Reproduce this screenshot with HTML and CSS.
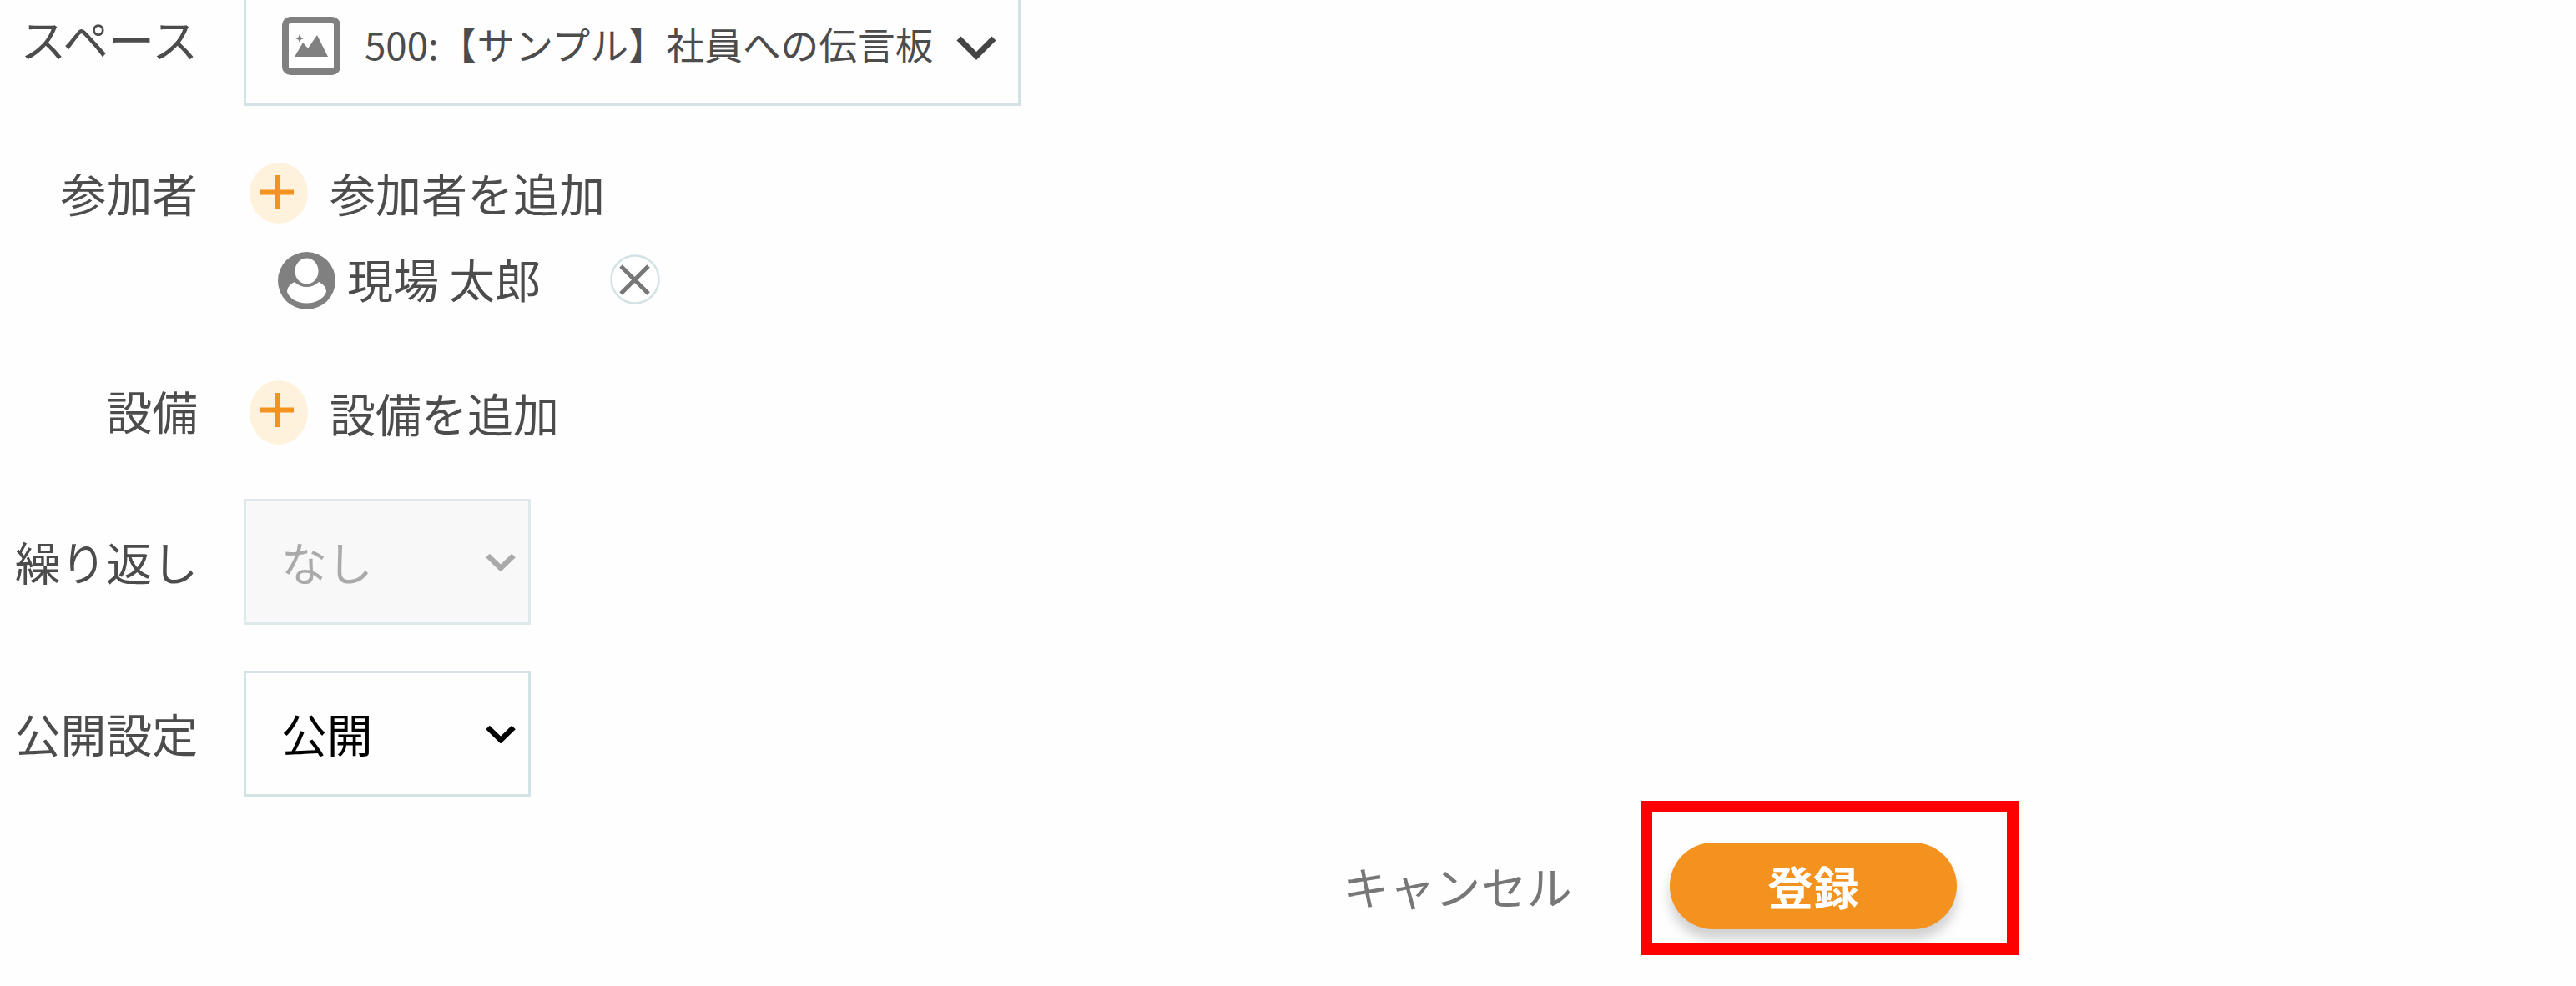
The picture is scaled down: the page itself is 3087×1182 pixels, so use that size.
FILE: index.html
```
<!DOCTYPE html>
<html lang="ja">
	<head>
		<meta charset="utf-8">
		<title>スケジュール登録</title>
		<link rel="stylesheet" href="styles.css">
	</head>
	<body>
		<div class="form">
			<div class="row row-space">
				<div class="label">スペース</div>
				<div class="space-box">
					<svg class="icon-image" viewBox="0 0 70 70">
						<rect x="4" y="4" width="62" height="62" rx="6" fill="none" stroke="#808080" stroke-width="8"/>
						<path d="M15 48L25 31L31 38L42 22L55 48Z" fill="#808080"/>
						<path d="M21 21L22.5 24.5L26 26L22.5 27.5L21 31L19.500 27.500L16 26L19.500 24.500Z" fill="#808080"/>
					</svg>
					<span class="space-name">500:【サンプル】社員への伝言板</span>
					<svg class="icon-arrow" viewBox="0 0 48 30">
						<path d="M3 4L24 25L45 4" fill="none" stroke="#444" stroke-width="7"/>
					</svg>
				</div>
			</div>
			<div class="row row-member">
				<div class="label">参加者</div>
				<div class="add">
					<svg class="icon-plus" viewBox="0 0 70 73">
						<ellipse cx="35" cy="36.5" rx="35" ry="36.5" fill="#fff2dd"/>
						<path d="M13 35.500H53M33.500 15V56" stroke="#f3921e" stroke-width="6"/>
					</svg>
					<span>参加者を追加</span>
				</div>
			</div>
			<div class="member">
				<svg class="icon-user" viewBox="0 0 69 69">
					<circle cx="34.500" cy="34.500" r="34.500" fill="#808080"/>
					<path d="M20 36C14 39 11 43 11 48C14 56 23 61.500 34.500 61.500C46 61.500 55 56 58 48C58 43 55 39 49 36C45 40 40 42 34.500 42C29 42 24 40 20 36Z" fill="#fff"/>
					<ellipse cx="34.500" cy="23" rx="15.500" ry="17" fill="#fff" stroke="#808080" stroke-width="3"/>
				</svg>
				<span class="member-name">現場 太郎</span>
				<svg class="icon-delete" viewBox="0 0 60 60">
					<circle cx="30" cy="30" r="28.500" fill="#fff" stroke="#d3e2e4" stroke-width="2.500"/>
					<path d="M13 14L46 47M46 14L13 47" stroke="#777" stroke-width="5"/>
				</svg>
			</div>
			<div class="row row-facility">
				<div class="label">設備</div>
				<div class="add">
					<svg class="icon-plus" viewBox="0 0 70 77" preserveAspectRatio="none">
						<ellipse cx="35" cy="38.500" rx="35" ry="38.500" fill="#fff2dd"/>
						<path d="M13 35.500H53M33.500 15V56" stroke="#f3921e" stroke-width="6"/>
					</svg>
					<span>設備を追加</span>
				</div>
			</div>
			<div class="row row-repeat">
				<div class="label">繰り返し</div>
				<div class="select disabled">
					<span>なし</span>
					<svg class="icon-select" viewBox="0 0 36 22">
						<path d="M2.500 3L18 18L33.500 3" fill="none" stroke="#aaa" stroke-width="6.500"/>
					</svg>
				</div>
			</div>
			<div class="row row-public">
				<div class="label">公開設定</div>
				<div class="select">
					<span>公開</span>
					<svg class="icon-select" viewBox="0 0 36 22">
						<path d="M2.500 3L18 18L33.500 3" fill="none" stroke="#000" stroke-width="6.500"/>
					</svg>
				</div>
			</div>
			<div class="footer">
				<div class="cancel">キャンセル</div>
				<div class="mark">
					<div class="submit">登録</div>
				</div>
			</div>
		</div>
	</body>
</html>
```

FILE: styles.css
```
*{
	box-sizing: border-box;
}
body{
	margin: 0;
	background: #fefefe;
	color: #4c4c4c;
	font-family: "Noto Sans CJK JP", sans-serif;
	font-size: 54.8px;
	line-height: 69px;
	white-space: nowrap;
}
svg{
	display: block;
	flex: none;
}
.form{
	width: 3087px;
	height: 1182px;
	overflow: hidden;
}
.row{
	display: flex;
	align-items: center;
}
.label{
	width: 237px;
	margin-right: 55px;
	padding-bottom: 3px;
	text-align: right;
}

/* スペース */
.row-space{
	height: 127px;
	align-items: flex-start;
}
.row-space .label{
	padding-top: 11px;
}
.space-box{
	display: flex;
	align-items: center;
	width: 931px;
	height: 127px;
	padding: 0 26px 15px 43px;
	border: 3px solid #d3e2e4;
	border-top: 0;
	font-size: 45.7px;
}
.icon-image{
	width: 70px;
	height: 70px;
}
.space-name{
	flex: 1;
	margin-left: 29px;
	padding-bottom: 4px;
}
.icon-arrow{
	width: 48px;
	height: 30px;
	margin-top: 4px;
}

/* 参加者・設備 */
.row-member{
	height: 73px;
	margin-top: 68px;
}
.add{
	display: flex;
	align-items: center;
	padding-left: 7px;
	font-size: 55px;
}
.row-member .add span{
	padding-bottom: 3px;
}
.icon-plus{
	width: 70px;
	height: 73px;
	margin-right: 26px;
}
.member{
	display: flex;
	align-items: center;
	height: 69px;
	margin-top: 34px;
	padding-left: 333px;
}
.icon-user{
	width: 69px;
	height: 69px;
}
.member-name{
	width: 231px;
	margin: 0 84px 7px 14px;
	font-size: 55px;
}
.icon-delete{
	width: 60px;
	height: 60px;
	margin-bottom: 4px;
}
.row-facility{
	height: 77px;
	margin-top: 85px;
}
.row-facility .label{
	padding-bottom: 7px;
}
.row-facility .icon-plus{
	height: 77px;
}

/* 繰り返し・公開設定 */
.row-repeat{
	margin-top: 65px;
}
.row-public{
	margin-top: 55px;
}
.select{
	display: flex;
	align-items: center;
	justify-content: space-between;
	width: 344px;
	height: 151px;
	padding: 0 15px 0 42px;
	border: 3px solid #d3e2e4;
	color: #000;
}
.select span{
	padding-bottom: 3px;
}
.icon-select{
	width: 36px;
	height: 22px;
}
.disabled{
	background: #f8f8f8;
	border-color: #dde9ea;
	color: #aaa;
}

/* ボタン */
.footer{
	display: flex;
	align-items: center;
	height: 185px;
	margin-top: 5px;
	padding-left: 1610px;
}
.cancel{
	width: 356px;
	padding-top: 17px;
	color: #777;
}
.mark{
	width: 453px;
	height: 185px;
	padding: 36px 0 0 21px;
	border: 14px solid #f00;
	overflow: hidden;
}
.submit{
	width: 344px;
	height: 104px;
	border-radius: 52px;
	background: #f3921e;
	box-shadow: 0 12px 14px rgba(0, 0, 0, .18);
	color: #fff;
	font-weight: bold;
	line-height: 103px;
	text-align: center;
}
```
